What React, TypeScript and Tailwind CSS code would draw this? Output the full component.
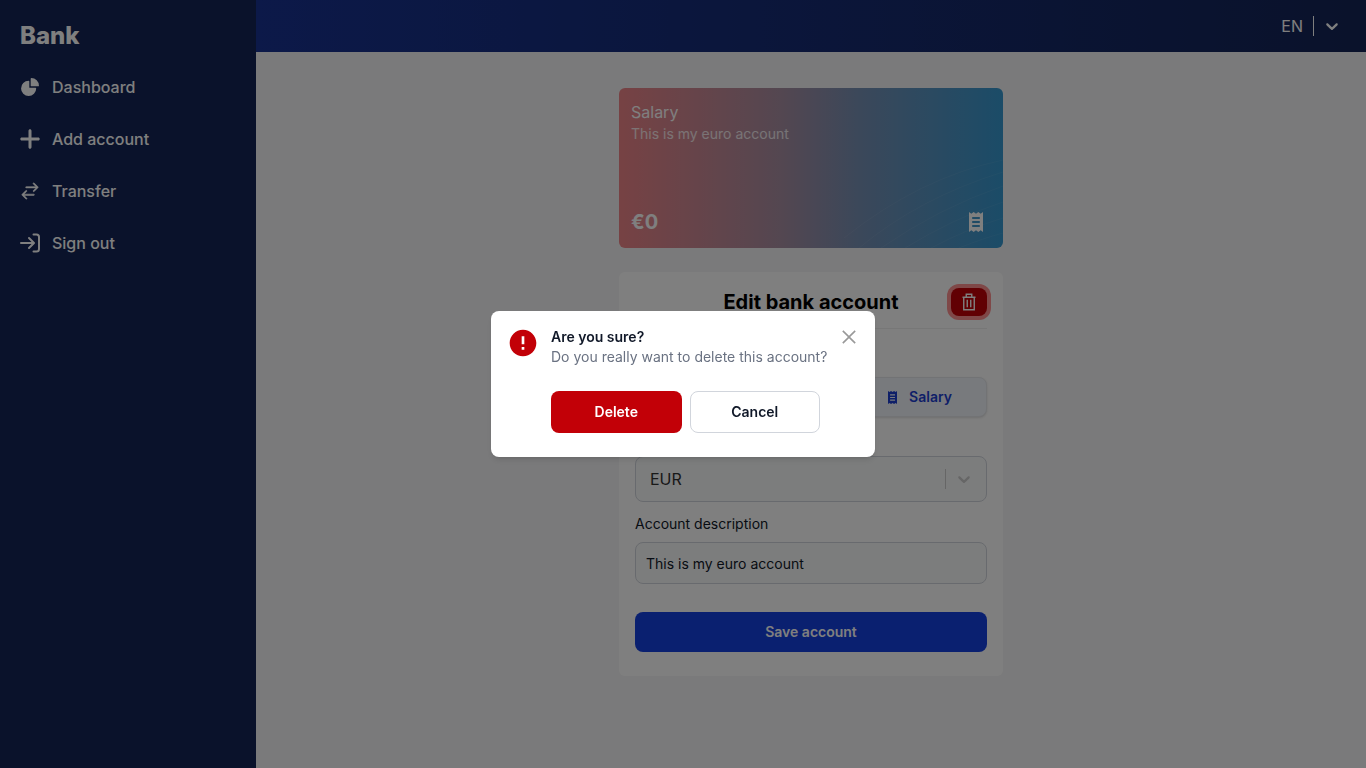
import type { ReactNode } from "react";
import { FaPlus } from "react-icons/fa6";
import { HiArrowsRightLeft, HiChartPie } from "react-icons/hi2";
import { RiErrorWarningFill } from "react-icons/ri";
import { AiOutlineClose } from "react-icons/ai";

function SignOutIcon() {
  return (
    <svg viewBox="0 0 20 20" fill="none" stroke="currentColor" strokeWidth="2" strokeLinecap="round" strokeLinejoin="round" aria-hidden="true" className="size-5">
      <path d="M1 10h12.5M9 5l5 5-5 5M13.5 1.5h3A2.5 2.5 0 0 1 19 4v12a2.5 2.5 0 0 1-2.5 2.5h-3" />
    </svg>
  );
}

const navItems: { label: string; icon: ReactNode }[] = [
  { label: "Dashboard", icon: <HiChartPie className="size-[22px] shrink-0" /> },
  { label: "Add account", icon: <FaPlus className="size-6 shrink-0" /> },
  { label: "Transfer", icon: <HiArrowsRightLeft className="size-5" stroke="currentColor" strokeWidth="0.7" /> },
  { label: "Sign out", icon: <SignOutIcon /> },
];

function Chevron({ className }: { className: string }) {
  return (
    <svg viewBox="0 0 20 20" fill="currentColor" aria-hidden="true" className={className}>
      <path d="M4.516 7.548c0.436-0.446 1.043-0.481 1.576 0l3.908 3.747 3.908-3.747c0.533-0.481 1.141-0.446 1.574 0 0.436 0.445 0.408 1.197 0 1.615-0.406 0.418-4.695 4.502-4.695 4.502-0.217 0.223-0.502 0.335-0.787 0.335s-0.57-0.112-0.789-0.335c0 0-4.287-4.084-4.695-4.502s-0.436-1.17 0-1.615z" />
    </svg>
  );
}

function ReceiptIcon({ className }: { className: string }) {
  return (
    <svg viewBox="0 0 14 20" fill="currentColor" fillRule="evenodd" aria-hidden="true" className={className}>
      <path d="M0 0l2.33 1.7L4.67 0 7 1.7 9.33 0l2.34 1.7L14 0v20l-2.33-1.7L9.33 20 7 18.3 4.67 20l-2.34-1.7L0 20zM3.2 5.1v1.8h7.6V5.1zM3.2 9.1v1.8h7.6V9.1zM3.2 13.1v1.8h7.6v-1.8z" />
    </svg>
  );
}

function TrashIcon() {
  return (
    <svg viewBox="0 0 20 20" fill="none" stroke="currentColor" strokeWidth="1.4" aria-hidden="true" className="size-5">
      <path d="M3.5 5.25h13M7.25 5V2.25h5.5V5M4.75 5.25v12.5h10.5V5.25M8.25 7.75v7.5M11.75 7.75v7.5" />
    </svg>
  );
}

function Sidebar() {
  return (
    <aside className="w-64 shrink-0 bg-[#142456] px-5 py-4 text-white">
      <p className="pt-1 text-2xl leading-8 font-extrabold">Bank</p>
      <nav className="mt-[15px] flex flex-col gap-3">
        {navItems.map((item) => (
          <a key={item.label} href="#" className="flex h-10 items-center gap-3 font-medium">
            <span className="flex w-5 shrink-0 justify-center">{item.icon}</span>
            {item.label}
          </a>
        ))}
      </nav>
    </aside>
  );
}

function AccountCard() {
  return (
    <section className="relative flex h-40 flex-col justify-between overflow-hidden rounded-md bg-[linear-gradient(to_right,#ee8488,#a88ea2_42%,#7890b4_62%,#3698d0)] p-3 text-white">
      <svg viewBox="0 0 384 160" fill="none" stroke="#ffffff" strokeOpacity="0.06" aria-hidden="true" className="absolute inset-0 size-full">
        <path d="M240 160Q300 110 384 84M262 160Q320 120 384 98M286 160Q335 130 384 114M312 160Q350 140 384 130M225 150Q300 90 384 72M340 160Q365 150 384 145" />
      </svg>
      <div className="relative">
        <h2 className="text-base leading-6">Salary</h2>
        <p className="text-sm leading-5 text-white/80">This is my euro account</p>
      </div>
      <div className="relative flex items-center justify-between pr-2">
        <p className="text-xl leading-7 font-bold">€0</p>
        <ReceiptIcon className="h-5 w-auto" />
      </div>
    </section>
  );
}

function EditForm() {
  return (
    <form className="rounded-md bg-white px-4 pt-4 pb-6 text-sm text-gray-900">
      <header className="grid h-[41px] grid-cols-[36px_1fr_36px] items-start border-b border-[#eee]">
        <h1 className="col-start-2 text-center text-xl leading-7 font-bold text-black">Edit bank account</h1>
        <button type="button" aria-label="Delete account" className="flex h-7 items-center justify-center rounded-lg bg-[#c20007] text-white ring-4 ring-[#ff9090]">
          <TrashIcon />
        </button>
      </header>

      <div role="group" aria-label="Account type" className="mt-12 flex h-10 justify-end">
        <button type="button" className="flex w-[134px] items-center justify-center gap-3 rounded-lg border border-gray-200 bg-[#f1f4fb] font-semibold text-[#1d3fd0] shadow-sm">
          <ReceiptIcon className="h-[13px] w-auto" />
          Salary
        </button>
      </div>

      <div className="mt-[39px] flex h-[46px] items-center rounded-lg border border-gray-300 bg-gray-50 pr-3">
        <select aria-label="Currency" defaultValue="EUR" className="h-full min-w-0 flex-1 appearance-none bg-transparent px-3.5 text-base text-[#333]">
          <option>EUR</option>
        </select>
        <span className="h-5 w-px bg-[#ccc]" />
        <Chevron className="ml-2 size-5 text-[#ccc]" />
      </div>

      <label htmlFor="description" className="mt-3 block leading-5">Account description</label>
      <input id="description" defaultValue="This is my euro account" className="mt-2 h-[42px] w-full rounded-lg border border-gray-300 bg-gray-50 px-2.5 text-sm" />

      <button type="submit" className="mt-7 block h-10 w-full rounded-lg bg-[#1440e0] font-semibold text-white">Save account</button>
    </form>
  );
}

function ConfirmDialog() {
  return (
    <div className="fixed inset-0 flex items-center justify-center bg-black/50">
      <div role="dialog" aria-modal="true" aria-labelledby="confirm-title" className="flex w-96 items-start rounded-lg bg-white px-4 pt-4 pb-6 text-sm leading-5 shadow-md">
        <RiErrorWarningFill className="size-8 shrink-0 text-[#c20007]" />
        <div className="ml-3 min-w-0 flex-1">
          <h2 id="confirm-title" className="font-semibold text-gray-900">Are you sure?</h2>
          <p className="whitespace-nowrap text-gray-500">Do you really want to delete this account?</p>
          <div className="mt-6 mr-[11px] grid grid-cols-2 gap-2">
            <button type="button" className="h-[42px] rounded-lg bg-[#c20007] font-semibold text-white">Delete</button>
            <button type="button" className="h-[42px] rounded-lg border border-gray-300 bg-white font-semibold text-gray-900">Cancel</button>
          </div>
        </div>
        <button type="button" aria-label="Close" className="flex h-5 w-7 shrink-0 items-center justify-end text-[#999]">
          <AiOutlineClose className="size-5 shrink-0" />
        </button>
      </div>
    </div>
  );
}

export default function App() {
  return (
    <div className="flex min-h-screen bg-[#f5f5f6] font-['Inter',sans-serif]">
      <Sidebar />
      <div className="min-w-0 flex-1">
        <header className="flex h-[52px] items-center justify-end bg-linear-to-r from-[#183292] to-[#142456] pr-4 text-white">
          <button type="button" className="flex items-center">
            <span className="mr-2.5">EN</span>
            <span className="h-5 w-px bg-white" />
            <Chevron className="mx-2 size-5" />
          </button>
        </header>
        <main className="mx-auto flex w-96 max-w-full flex-col gap-6 py-9">
          <AccountCard />
          <EditForm />
        </main>
      </div>
      <ConfirmDialog />
    </div>
  );
}
